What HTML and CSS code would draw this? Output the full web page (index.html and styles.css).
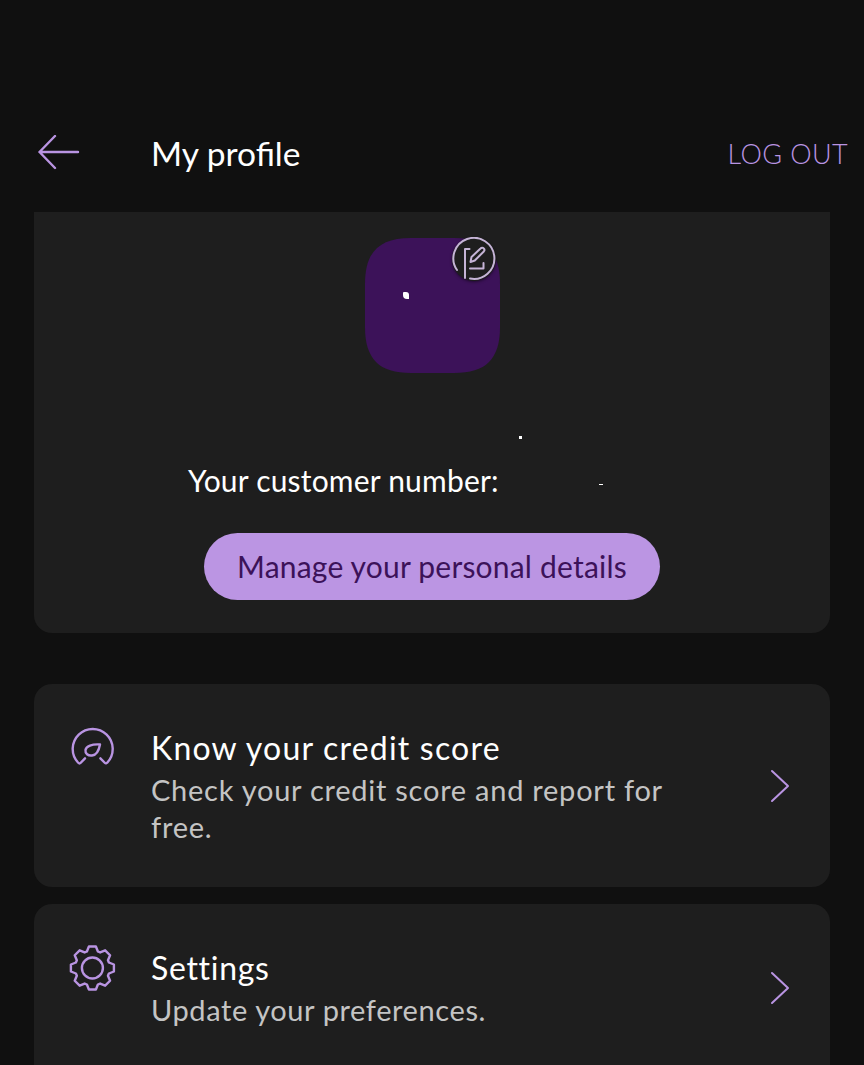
FILE: index.html
```html
<!DOCTYPE html>
<html lang="en">
<head>
  <meta charset="UTF-8" />
  <meta name="viewport" content="width=device-width, initial-scale=1.0"/>
  <title>My profile</title>
  <link rel="stylesheet" href="styles.css">
</head>
<body>
  <div class="page">
    <header class="topbar">
      <svg class="back" width="44" height="36" viewBox="0 0 44 36" fill="none" stroke="#b994e2" stroke-width="2.4" stroke-linecap="round" stroke-linejoin="round">
        <path d="M41 17H2.500M18 1 2.500 17 18 33"/>
      </svg>
      <h1 class="title">My profile</h1>
      <span class="logout">LOG OUT</span>
    </header>

    <section class="card profile">
      <div class="avatar">
        <svg class="avatar-shape" width="135" height="135" viewBox="0 0 135 135">
          <path fill="#3c1259" d="M46 0H89C121 0 135 14 135 46V89C135 121 121 135 89 135H46C14 135 0 121 0 89V46C0 14 14 0 46 0Z"/>
        </svg>
        <span class="speck speck-avatar"></span>
        <span class="edit">
          <svg width="44" height="44" viewBox="0 0 44 44" fill="none" stroke="#c5b4d6" stroke-width="2" stroke-linecap="round" stroke-linejoin="round">
            <path d="M5 33A20.500 20.500 0 1 1 18 41.500"/>
            <path d="M17.500 12H13V41"/>
            <path d="M18.500 25l1-5 9-8.500c1-1 2.500-1 3.300 0 .8.8.8 2 0 3l-9 9z"/>
            <path d="M18 31.500h13.500V26"/>
          </svg>
        </span>
      </div>
      <span class="speck speck-name"></span>
      <p class="customer">Your customer number:<span class="speck speck-number"></span></p>
      <button class="manage">Manage your personal details</button>
    </section>

    <section class="card row row-credit">
      <svg class="row-icon" width="46" height="44" viewBox="0 0 46 44" fill="none" stroke="#b994e2" stroke-width="2.400" stroke-linecap="round" stroke-linejoin="round">
        <path d="M15 33.300 10.500 38Q9.500 39 8 37.500A20 20 0 1 1 37.400 37.500Q36 39 35 38L30.400 33.300"/>
        <path d="M30 19.500C29 25 27 30 22 30.500 18 31 15 28.500 15.500 25 16 21 22 19 30 19.500Z"/>
      </svg>
      <div class="row-text">
        <h2 class="row-title">Know your credit score</h2>
        <p class="row-sub">Check your credit score and report for free.</p>
      </div>
      <svg class="chevron" width="20" height="34" viewBox="0 0 20 34" fill="none" stroke="#b994e2" stroke-width="2" stroke-linecap="round" stroke-linejoin="round">
        <path d="M2 2l16 15L2 32"/>
      </svg>
    </section>

    <section class="card row row-settings">
      <svg class="row-icon" width="46" height="46" viewBox="0 0 46 46" fill="none" stroke="#b994e2" stroke-width="2.400" stroke-linecap="round" stroke-linejoin="round">
        <g transform="translate(22.400 23)">
          <path d="M-3.500-21.500 3.500-21.500 5.500-16.500 7.780-15.560 12.730-17.680 17.680-12.730 15.560-7.780 16.500-5.500 21.500-3.500 21.500 3.500 16.500 5.500 15.560 7.780 17.680 12.730 12.730 17.680 7.780 15.560 5.500 16.500 3.500 21.500-3.500 21.500-5.500 16.500-7.780 15.560-12.730 17.680-17.680 12.730-15.560 7.780-16.500 5.500-21.500 3.500-21.500-3.500-16.500-5.500-15.560-7.780-17.680-12.730-12.730-17.680-7.780-15.560-5.500-16.500Z"/>
          <circle r="10.500"/>
        </g>
      </svg>
      <div class="row-text">
        <h2 class="row-title">Settings</h2>
        <p class="row-sub">Update your preferences.</p>
      </div>
      <svg class="chevron" width="20" height="34" viewBox="0 0 20 34" fill="none" stroke="#b994e2" stroke-width="2" stroke-linecap="round" stroke-linejoin="round">
        <path d="M2 2l16 15L2 32"/>
      </svg>
    </section>
  </div>
</body>
</html>
```

FILE: styles.css
```css
html, body {
  margin: 0;
  height: 1065px;
  overflow: hidden;
  background: #101010;
}
body {
  font-family: Lato, "Open Sans", sans-serif;
}
.page {
  padding: 118px 34px 0;
}
.topbar {
  display: flex;
  align-items: center;
  height: 70px;
  margin-bottom: 24px;
}
.back {
  margin-left: 3px;
  flex: none;
}
.title {
  margin: 0 0 0 70px;
  flex: 1;
  color: #fff;
  font-size: 33.500px;
  font-weight: 400;
}
.logout {
  color: #b994e2;
  font-size: 27px;
  font-weight: 300;
  letter-spacing: 0.4px;
  margin-right: -18px;
}
.card {
  background: #1e1e1e;
  border-radius: 18px;
}
.profile {
  position: relative;
  display: flex;
  flex-direction: column;
  align-items: center;
  height: 421px;
  padding-top: 26px;
  box-sizing: border-box;
  border-radius: 0 0 18px 18px;
  margin-bottom: 51px;
}
.avatar {
  position: relative;
  width: 135px;
  height: 135px;
}
.avatar-shape {
  display: block;
}
.edit {
  position: absolute;
  top: -1px;
  right: 4px;
  width: 44px;
  height: 44px;
  border-radius: 50%;
  background: #1e1e1e;
  box-shadow: 0 1px 3px rgba(0,0,0,0.5);
}
.speck {
  position: absolute;
  background: #fff;
}
.speck-avatar {
  left: 38px;
  top: 54px;
  width: 6px;
  height: 7px;
  border-radius: 1px 3px 0 4px;
}
.speck-name {
  left: 485px;
  top: 224px;
  width: 3px;
  height: 3px;
}
.speck-number {
  left: 565px;
  top: 272px;
  width: 4px;
  height: 1px;
}
.customer {
  margin: 89px 0 0;
  width: 100%;
  padding-left: 154px;
  box-sizing: border-box;
  color: #fff;
  font-size: 30px;
  letter-spacing: 0.2px;
}
.manage {
  margin-top: 35px;
  width: 456px;
  height: 67px;
  padding: 0 0 2px;
  border: none;
  border-radius: 34px;
  background: #bb95e3;
  color: #3c1259;
  font-family: inherit;
  font-size: 30px;
  letter-spacing: 0.2px;
}
.row {
  display: flex;
  align-items: flex-start;
  box-sizing: border-box;
}
.row-credit {
  height: 203px;
  margin-bottom: 17px;
}
.row-settings {
  height: 200px;
}
.row-icon {
  flex: none;
  margin-left: 36px;
  margin-top: 41px;
  overflow: visible;
}
.row-text {
  flex: 1;
  margin-left: 35px;
  padding-top: 44px;
}
.row-title {
  margin: 0;
  color: #fff;
  font-size: 32px;
  font-weight: 400;
  line-height: 40px;
  letter-spacing: 1.2px;
}
.row-settings .row-title {
  letter-spacing: 0.7px;
}
.row-sub {
  margin: 3px 0 0;
  width: 530px;
  color: #c4c4c4;
  font-size: 29px;
  line-height: 37px;
  letter-spacing: 0.75px;
}
.row-settings .row-sub {
  letter-spacing: 0.6px;
}
.chevron {
  flex: none;
  margin: 85px 40px 0 0;
}
.row-settings .chevron {
  margin-top: 67px;
}
```
